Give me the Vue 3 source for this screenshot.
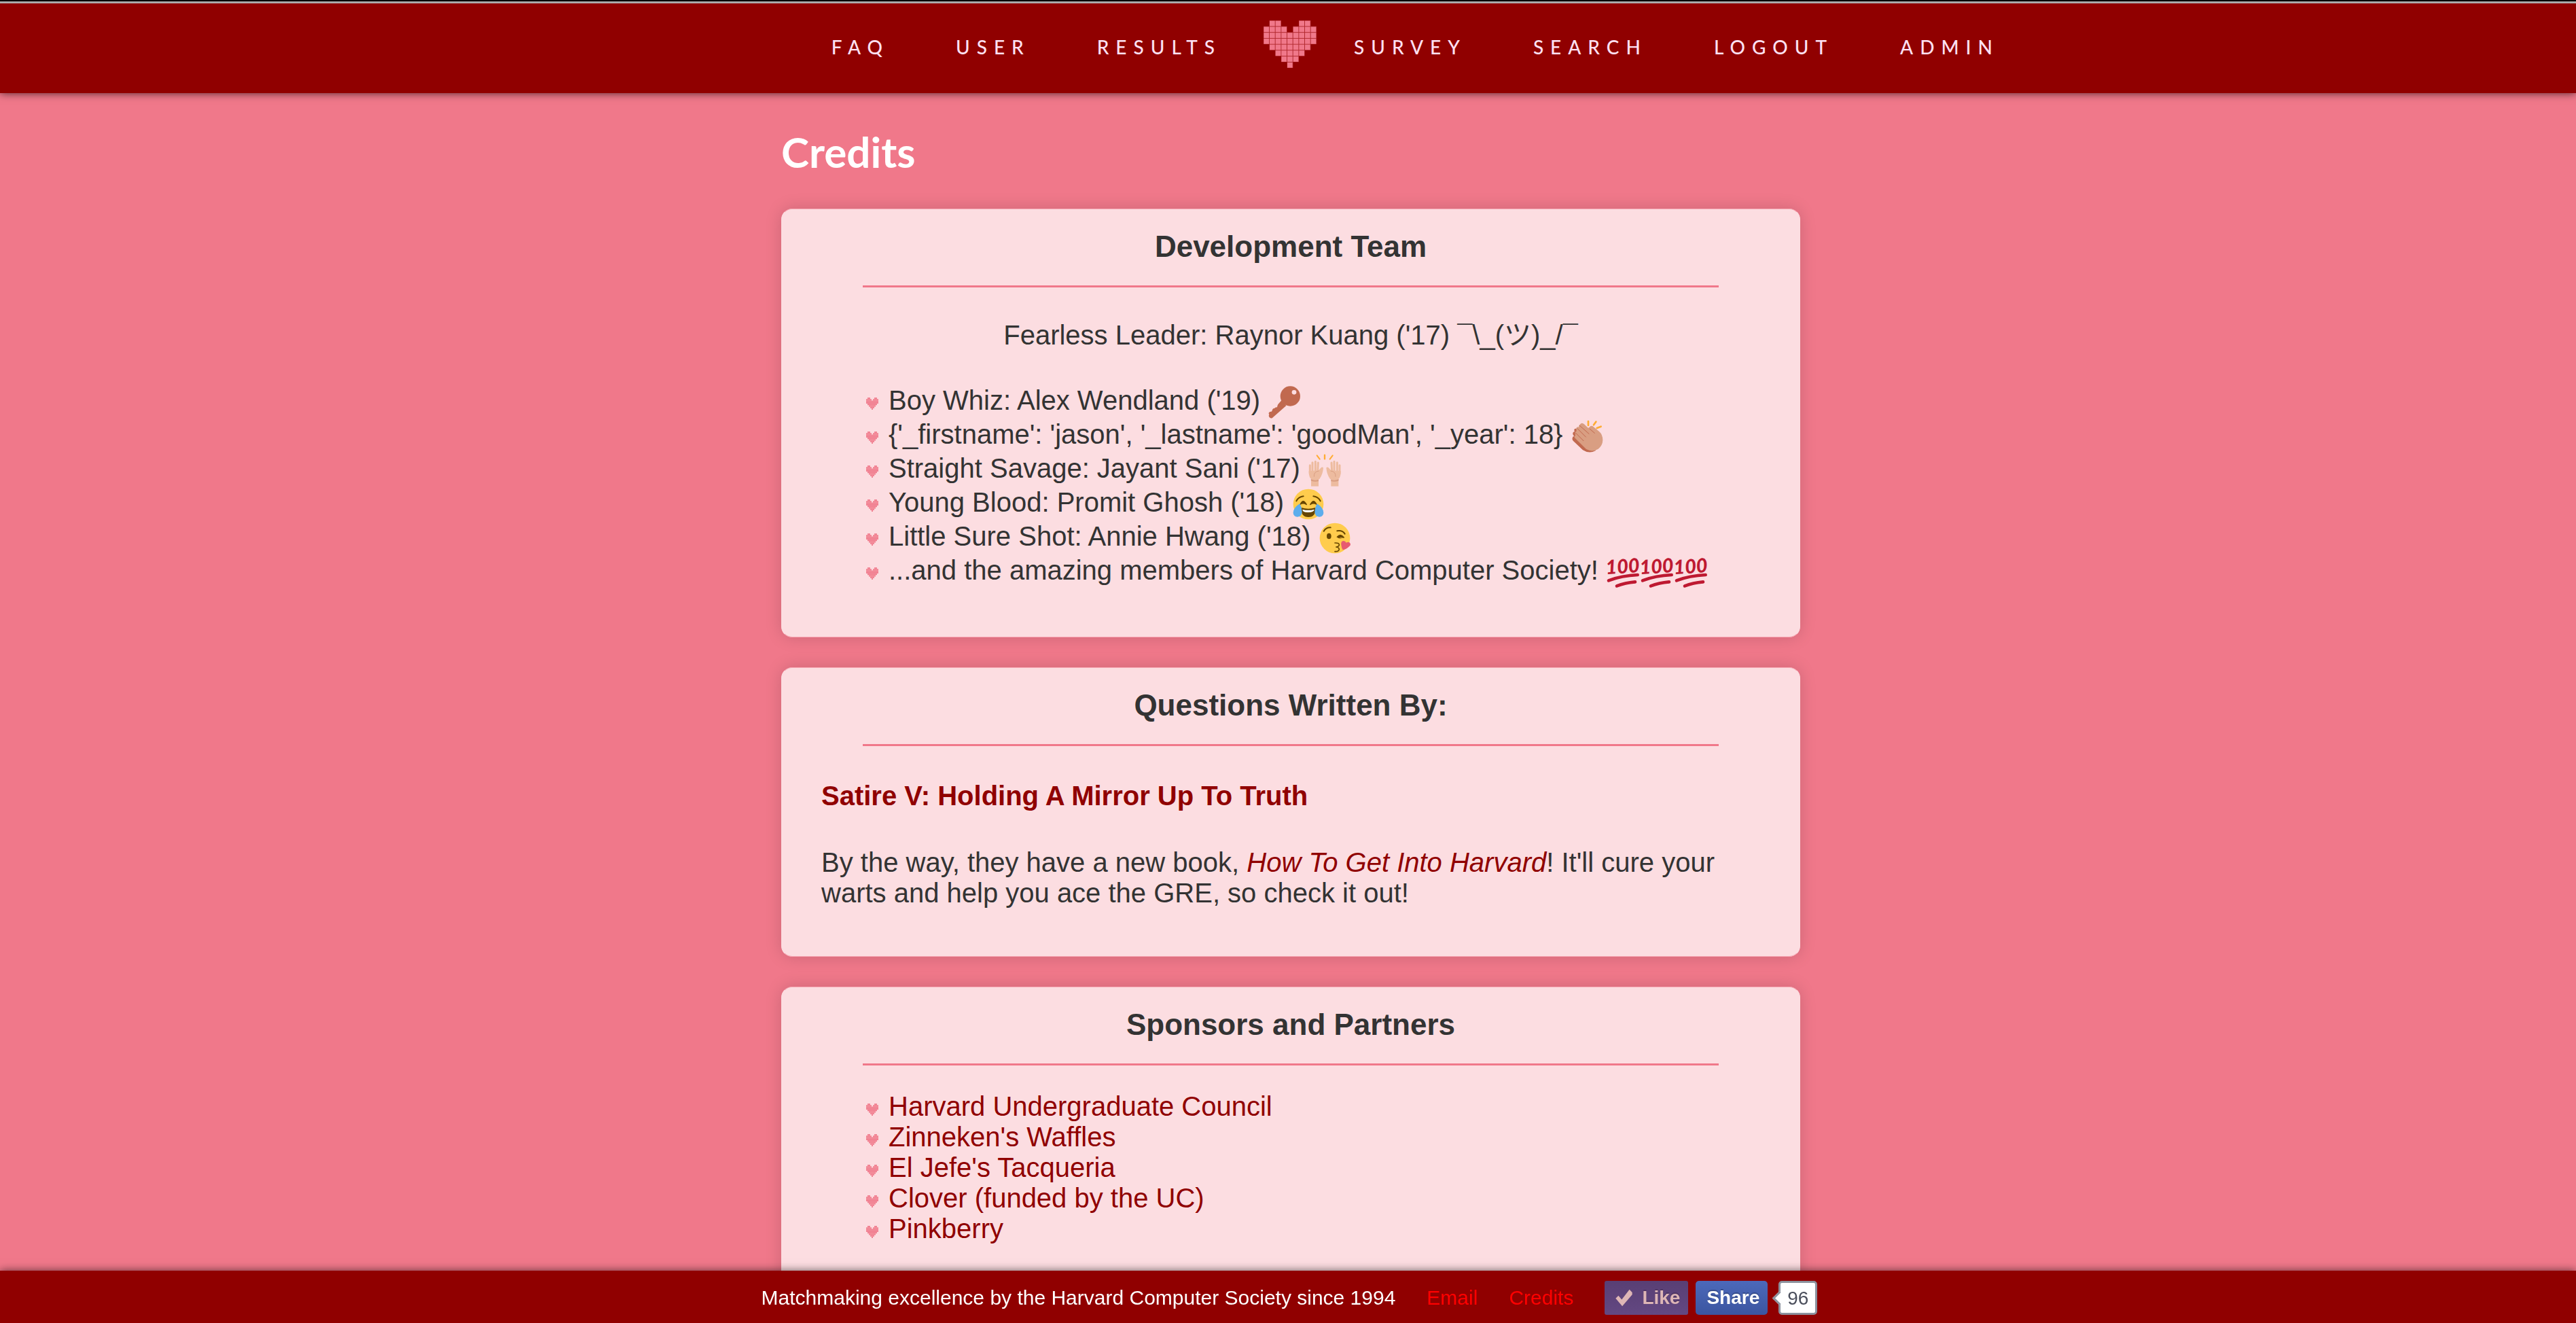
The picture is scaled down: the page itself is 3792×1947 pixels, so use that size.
<script setup>
const leftNav = ['FAQ', 'USER', 'RESULTS']
const rightNav = ['SURVEY', 'SEARCH', 'LOGOUT', 'ADMIN']

// Filled column ranges of the pixel heart, one entry per row
const heartRows = [
  [1, 2, 6, 7],
  [0, 1, 2, 3, 5, 6, 7, 8],
  [0, 1, 2, 3, 4, 5, 6, 7, 8],
  [0, 1, 2, 3, 4, 5, 6, 7, 8],
  [1, 2, 3, 4, 5, 6, 7],
  [2, 3, 4, 5, 6],
  [3, 4, 5],
  [4]
]
const cells = heartRows.flatMap((cols, y) => cols.map((x) => ({ x, y })))

const team = [
  { text: "Boy Whiz: Alex Wendland ('19)", emoji: ['key'] },
  { text: "{'_firstname': 'jason', '_lastname': 'goodMan', '_year': 18}", emoji: ['clap'] },
  { text: "Straight Savage: Jayant Sani ('17)", emoji: ['hands'] },
  { text: "Young Blood: Promit Ghosh ('18)", emoji: ['joy'] },
  { text: "Little Sure Shot: Annie Hwang ('18)", emoji: ['kiss'] },
  { text: '...and the amazing members of Harvard Computer Society!', emoji: ['hundred', 'hundred', 'hundred'] }
]

const sponsors = [
  'Harvard Undergraduate Council',
  "Zinneken's Waffles",
  "El Jefe's Tacqueria",
  'Clover (funded by the UC)',
  'Pinkberry'
]
</script>

<template>
  <svg class="sprite" aria-hidden="true">
    <symbol id="heart" viewBox="0 0 234 208" preserveAspectRatio="none">
      <g fill="#f0788a">
        <rect v-for="c in cells" :key="'b' + c.x + '-' + c.y" :x="c.x * 26" :y="c.y * 26" width="26" height="26" opacity="0.4" />
        <rect v-for="c in cells" :key="'f' + c.x + '-' + c.y" :x="c.x * 26 + 1" :y="c.y * 26 + 2" width="23" height="23" />
      </g>
    </symbol>
    <symbol id="key" viewBox="92 52 150 150">
      <path fill="#c1694f" d="M154 118 138 136q-3 5-4 13-8 0-11 4-10 1-11 11-1 3-3 4-9-1-12 6-1 4 2 6-3 5-1 11 6 9 14 6L174 142Z" />
      <circle cx="192" cy="100" r="44" fill="#c1694f" />
      <circle cx="209" cy="83" r="10" fill="#fcdde1" />
    </symbol>
    <symbol id="clap" viewBox="98 82 150 150">
      <path fill="#c1694f" d="M106 165q-2 7 4 13l42 40q28 18 56 3l20-80-40-26-12 6-51 3q-12-3-11 6 0 4 2 6-10 3-8 11 1 6 6 9-8 2-8 9Z" />
      <path fill="#d99e82" d="M142 102q8-6 16 2l19 18 8-9q6-4 11 0l28 23q16 14 16 38-1 24-20 39-26 16-53 1l-51-50q-4-7 3-9l-1-10q-2-8 6-10l-1-14q4-8 10-4 1-9 9-15Z" />
      <path fill="none" stroke="#c1694f" stroke-width="3" d="m127 122 39 39M137 109l43 38M120 142l36 36M182 124l23 20" />
      <path fill="none" stroke="#ffac33" stroke-width="8" stroke-linecap="round" d="M176 91v18M210 93l-10 14M232 114l-18 7" />
    </symbol>
    <symbol id="hands" viewBox="255 352 150 150">
      <g id="hand">
        <path fill="#edbb9f" d="M270 460h33v38h-33Z" />
        <path fill="none" stroke="#edbb9f" stroke-width="9" stroke-linecap="round" d="M265 405v36M276 393v45M289 389v46M301 394l-2 42" />
        <path fill="#edbb9f" d="M260 430 303 428l11-12q5-5 10 0-2 30-17 50-20 12-40-3-8-12-7-33Z" />
        <path fill="none" stroke="#d99e82" stroke-width="3" d="M283 456q-2-23 22-26" />
        <path fill="#d99e82" d="M269 466q17 9 34 2v8q-18 3-33-2Z" />
        <path fill="none" stroke="#ffac33" stroke-width="6" stroke-linecap="round" d="m296 362 12 16" />
      </g>
      <use href="#hand" transform="translate(661 0) scale(-1 1)" />
      <path fill="none" stroke="#ffac33" stroke-width="7" stroke-linecap="round" d="M330 360v17" />
    </symbol>
    <symbol id="joy" viewBox="195 502 150 150">
      <circle cx="270" cy="577" r="67" fill="#ffcc4d" />
      <g id="joy-half">
        <path fill="none" stroke="#664500" stroke-width="6" stroke-linecap="round" d="M217 563q10-19 31-21" />
        <path fill="#664500" d="M231 579q15-33 32-3 3 7-3 4-12-8-25-1-4 3-4 0Z" />
      </g>
      <use href="#joy-half" transform="translate(540 0) scale(-1 1)" />
      <path fill="#664500" d="M239 592q31 11 62 0 3 42-31 42t-31-42Z" />
      <path fill="#fff" d="M244 600q26 7 52 0 0 12-26 13t-26-13Z" />
      <path id="tear" fill="#5dadec" d="M232 575q10 18 10 36-1 22-20 22-18-1-19-18 1-24 29-40Z" />
      <use href="#tear" transform="translate(540 0) scale(-1 1)" />
    </symbol>
    <symbol id="kiss" viewBox="308 652 150 150">
      <circle cx="383" cy="727" r="67" fill="#ffcc4d" />
      <path fill="none" stroke="#664500" stroke-width="6" stroke-linecap="round" d="M334 696q10-17 30-16M393 695q23-4 34 13" />
      <ellipse cx="357" cy="718" rx="10" ry="13" fill="#664500" />
      <path fill="#664500" d="M390 722q17-22 34 0 3 6-3 4-11-3-19 0l13 3q-15 2-25-7Z" />
      <path fill="none" stroke="#664500" stroke-width="5" stroke-linecap="round" d="M383 748q19-1 19 8 0 8-15 10 15 1 15 11-2 10-19 9" />
      <path fill="#e75a70" d="M411 757q-3-17 10-18 9 0 12 8 9-6 16 0 7 9-3 17-11 12-28 15-6-9-7-22Z" />
    </symbol>
    <symbol id="underlines" viewBox="0 0 150 150">
      <path fill="none" stroke="#be1931" stroke-width="14" stroke-linecap="round" d="M12 112q58-22 128-25M48 136q36-14 81-18" />
    </symbol>
  </svg>

  <header class="topbar">
    <nav class="menu" aria-label="Main">
      <ul class="left">
        <li v-for="item in leftNav" :key="item"><a href="#">{{ item }}</a></li>
      </ul>
      <a class="home" href="#" aria-label="Home"><svg class="logo"><use href="#heart" /></svg></a>
      <ul>
        <li v-for="item in rightNav" :key="item"><a href="#">{{ item }}</a></li>
      </ul>
    </nav>
  </header>

  <main class="page">
    <h1>Credits</h1>

    <section class="card">
      <h2>Development Team</h2>
      <hr />
      <p class="leader">Fearless Leader: Raynor Kuang ('17) ¯\_(ツ)_/¯</p>
      <ul class="list team">
        <li v-for="member in team" :key="member.text">
          <svg class="bullet" aria-hidden="true"><use href="#heart" /></svg>{{ member.text }}
          <svg v-for="(name, i) in member.emoji" :key="i" class="emoji" viewBox="0 0 150 150" aria-hidden="true">
            <template v-if="name === 'hundred'">
              <text x="1" y="85" transform="rotate(-4 1 85)">100</text>
              <use href="#underlines" width="150" height="150" />
            </template>
            <use v-else :href="'#' + name" width="150" height="150" />
          </svg>
        </li>
      </ul>
    </section>

    <section class="card">
      <h2>Questions Written By:</h2>
      <hr />
      <p class="authors"><a href="#">Satire V: Holding A Mirror Up To Truth</a></p>
      <p class="book">By the way, they have a new book, <a href="#"><em>How To Get Into Harvard</em></a>! It'll cure your warts and help you ace the GRE, so check it out!</p>
    </section>

    <section class="card">
      <h2>Sponsors and Partners</h2>
      <hr />
      <ul class="list sponsors">
        <li v-for="name in sponsors" :key="name">
          <svg class="bullet" aria-hidden="true"><use href="#heart" /></svg><a href="#">{{ name }}</a>
        </li>
      </ul>
    </section>
  </main>

  <footer class="bottombar">
    <span>Matchmaking excellence by the Harvard Computer Society since 1994</span>
    <a href="#">Email</a>
    <a href="#">Credits</a>
    <div class="social">
      <button type="button" class="like">
        <svg viewBox="0 0 32 32" aria-hidden="true"><path d="M1 17 6 12l6 7L26 1l5 5v4L13 31Z" /></svg>Like
      </button>
      <button type="button" class="share">Share</button>
      <span class="count">96</span>
    </div>
  </footer>
</template>

<style>
body {
  margin: 0;
  background: #f0788a;
}
</style>

<style scoped>
.sprite {
  position: absolute;
  width: 0;
  height: 0;
}

.topbar {
  position: relative;
  padding: 25px 0 37px;
  border-top: 5px solid #aaa;
  background: #900000;
  box-shadow: 0 0 12px rgba(0, 0, 0, 0.7);
}

.topbar::before {
  content: '';
  position: absolute;
  top: -5px;
  left: 0;
  right: 0;
  height: 2px;
  background: #000;
}

.menu {
  display: grid;
  grid-template-columns: 1fr auto 1fr;
  align-items: center;
  padding-left: 6px;
}

.menu ul {
  display: flex;
  gap: 98px;
  margin: 0;
  padding: 8px 55px 0;
  list-style: none;
}

.menu .left {
  justify-content: flex-end;
  padding-right: 62px;
}

.menu a {
  display: block;
  color: #fde0f2;
  font: 500 28px/34px Lato, 'Trebuchet MS', sans-serif;
  letter-spacing: 10px;
  text-decoration: none;
}

.logo {
  display: block;
  width: 78px;
  height: 70px;
}

.page {
  box-sizing: border-box;
  max-width: 1508px;
  margin: 0 auto;
  padding: 50px 0 0 8px;
  color: #333;
  font: 40px/45px Arial, 'Liberation Sans', 'Noto Sans CJK JP', sans-serif;
}

h1 {
  margin: 0 0 48px;
  color: #fff;
  font: bold 62px/72px Lato, 'Trebuchet MS', sans-serif;
}

.card {
  margin-bottom: 44px;
  padding: 30px 58px;
  border: 1px solid #f7a9b5;
  border-right-color: #fcdde1;
  border-left-color: #fcdde1;
  border-radius: 16px;
  background: #fcdde1;
  box-shadow: 0 0 24px rgba(0, 0, 0, 0.15);
}

h2 {
  margin: 0;
  font-size: 44px;
  line-height: 50px;
  text-align: center;
}

hr {
  height: 3px;
  margin: 32px 61px 0;
  border: 0;
  background: #f0788a;
}

a {
  color: #900000;
  text-decoration: none;
}

p {
  margin: 0;
}

.leader {
  padding: 48px 0 51px;
  text-align: center;
}

.list {
  margin: 0;
  padding: 0 0 40px 66px;
  list-style: none;
}

.bullet {
  width: 18px;
  height: 18px;
  margin-right: 15px;
}

.emoji {
  width: 50px;
  height: 50px;
  overflow: visible;
  vertical-align: -14px;
}

.emoji text {
  font: italic 900 86px Lato, sans-serif;
  fill: #be1931;
}

.authors {
  padding: 51px 0 53px;
  font-weight: bold;
}

.book {
  padding-bottom: 40px;
}

.sponsors {
  padding-top: 38px;
}

.bottombar {
  position: fixed;
  right: 0;
  bottom: 0;
  left: 0;
  display: flex;
  justify-content: center;
  align-items: center;
  gap: 46px;
  padding: 15px 0 12px 4px;
  background: #900000;
  box-shadow: 0 0 12px rgba(0, 0, 0, 0.6);
  color: #fff;
  font: 30px/50px Arial, 'Liberation Sans', sans-serif;
}

.bottombar a {
  color: #f00;
}

.social {
  display: flex;
  gap: 11px;
}

.social button {
  display: flex;
  align-items: center;
  height: 50px;
  padding: 0 12px 0 16px;
  border: 0;
  border-radius: 5px;
  background: linear-gradient(#4c69ba, #3b55a0);
  color: #fff;
  font: bold 28px/50px Arial, 'Liberation Sans', sans-serif;
  text-shadow: 0 -2px 0 #354c8c;
}

.social .like {
  gap: 11px;
  padding: 0 12px 0 13px;
  border-radius: 3px;
  background: linear-gradient(#593f74, #634882);
  color: #deb6b6;
  text-shadow: 0 -2px 0 #4f3563;
}

.like svg {
  width: 31px;
  height: 26px;
  fill: #deb6b6;
}

.count {
  position: relative;
  box-sizing: border-box;
  height: 50px;
  margin-left: 5px;
  padding: 0 10px;
  border: 3px solid #8c929e;
  border-radius: 5px;
  background: #fff;
  color: #4b4f5c;
  font-size: 28px;
  line-height: 45px;
}

.count::before {
  content: '';
  position: absolute;
  top: 15px;
  left: -9px;
  width: 12px;
  height: 12px;
  border: solid #8c929e;
  border-width: 0 0 3px 3px;
  background: #fff;
  transform: rotate(45deg);
}
</style>
